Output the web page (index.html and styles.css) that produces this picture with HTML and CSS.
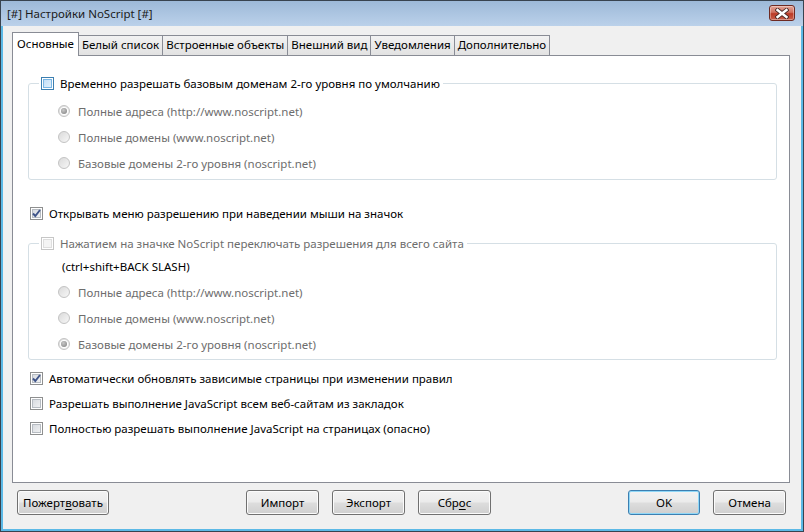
FILE: index.html
```html
<!DOCTYPE html>
<html lang="ru">

<head>
    <meta charset="UTF-8">
    <title>[#] Настройки NoScript [#]</title>
    <link rel="stylesheet" href="styles.css">
</head>

<body>
    <div class="window">
        <div class="titlebar">
            <span class="title">[#] Настройки NoScript [#]</span>
            <div class="close-btn">
                <svg width="14" height="11" viewBox="0 0 14 11">
                    <path d="M2.5 2 L11.5 9 M11.5 2 L2.5 9" stroke="#4a2a26" stroke-width="4.2" stroke-linecap="square" fill="none"/>
                    <path d="M2.5 2 L11.5 9 M11.5 2 L2.5 9" stroke="#ffffff" stroke-width="2.4" stroke-linecap="square" fill="none"/>
                </svg>
            </div>
        </div>

        <div class="client">
            <div class="tabs">
                <div class="tab active">Основные</div>
                <div class="tab">Белый список</div>
                <div class="tab">Встроенные объекты</div>
                <div class="tab">Внешний вид</div>
                <div class="tab">Уведомления</div>
                <div class="tab">Дополнительно</div>
            </div>

            <div class="panel">
                <fieldset class="group group-first">
                    <legend><span class="legend-inner"><span class="check hover"></span>Временно разрешать базовым доменам 2-го уровня по умолчанию</span></legend>
                    <div class="radio-row disabled"><span class="radio checked"></span>Полные адреса (http://www.noscript.net)</div>
                    <div class="radio-row disabled"><span class="radio"></span>Полные домены (www.noscript.net)</div>
                    <div class="radio-row disabled"><span class="radio"></span>Базовые домены 2-го уровня (noscript.net)</div>
                </fieldset>

                <div class="check-row first-check">
                    <span class="check"><svg width="11" height="11" viewBox="0 0 11 11"><path d="M2 5.5 L4.3 8 L9 2" stroke="#3f5489" stroke-width="1.9" fill="none"/></svg></span>Открывать меню разрешению при наведении мыши на значок
                </div>

                <fieldset class="group group-second">
                    <legend><span class="legend-inner disabled"><span class="check off"></span>Нажатием на значке NoScript переключать разрешения для всего сайта</span></legend>
                    <div class="hint">(ctrl+shift+BACK SLASH)</div>
                    <div class="radio-row disabled"><span class="radio"></span>Полные адреса (http://www.noscript.net)</div>
                    <div class="radio-row disabled"><span class="radio"></span>Полные домены (www.noscript.net)</div>
                    <div class="radio-row disabled"><span class="radio checked"></span>Базовые домены 2-го уровня (noscript.net)</div>
                </fieldset>

                <div class="check-row after-group">
                    <span class="check"><svg width="11" height="11" viewBox="0 0 11 11"><path d="M2 5.5 L4.3 8 L9 2" stroke="#3f5489" stroke-width="1.9" fill="none"/></svg></span>Автоматически обновлять зависимые страницы при изменении правил
                </div>
                <div class="check-row"><span class="check"></span>Разрешать выполнение JavaScript всем веб-сайтам из закладок</div>
                <div class="check-row"><span class="check"></span>Полностью разрешать выполнение JavaScript на страницах (опасно)</div>
            </div>

            <div class="buttons">
                <button class="btn wide">Пожерт<u>в</u>овать</button>
                <div class="btn-group">
                    <button class="btn">Импорт</button>
                    <button class="btn">Экспорт</button>
                    <button class="btn">Сбр<u>о</u>с</button>
                </div>
                <div class="btn-group">
                    <button class="btn default">OK</button>
                    <button class="btn">Отмена</button>
                </div>
            </div>
        </div>
    </div>
</body>

</html>
```

FILE: styles.css
```css
body {
    margin: 0;
    font-family: "Segoe UI", "Noto Sans", "Open Sans", sans-serif;
    font-size: 11.5px;
    color: #000;
    background: #f0f0f0;
}

.window {
    width: 804px;
    height: 532px;
    box-sizing: border-box;
    border: 1px solid #38434f;
    display: flex;
    flex-direction: column;
    background: #a9c4e2;
}

/* Заголовок окна */
.titlebar {
    height: 25px;
    flex: none;
    display: flex;
    align-items: center;
    justify-content: space-between;
    padding: 0 6px 0 6px;
    background: linear-gradient(#9db9d8, #bbd1ea);
}

.title {
    color: #1b1b1b;
    font-size: 11.5px;
}

.close-btn {
    width: 26px;
    height: 16px;
    box-sizing: border-box;
    margin-top: -1px;
    margin-right: 2px;
    border: 1px solid #6e2a22;
    border-radius: 3px;
    background: linear-gradient(#e3a597 0%, #d0705f 45%, #bb3a26 55%, #c9604c 100%);
    box-shadow: inset 0 0 0 1px rgba(255, 255, 255, 0.35);
    display: flex;
    align-items: center;
    justify-content: center;
}

.client {
    flex: 1;
    background: #f0f0f0;
    border: 2px solid #5cb9e6;
    border-top: none;
    display: flex;
    flex-direction: column;
}

/* Вкладки */
.tabs {
    display: flex;
    align-items: flex-end;
    height: 22px;
    margin: 7px 0 0 9px;
}

.tab {
    height: 19px;
    line-height: 18px;
    padding: 0 3px;
    border: 1px solid #898c95;
    border-bottom: none;
    margin-left: -1px;
    background: linear-gradient(#f2f2f2, #e2e2e2);
    white-space: nowrap;
}

.tab.active {
    height: 23px;
    line-height: 21px;
    padding: 0 4px;
    margin-left: 0;
    margin-bottom: -1px;
    background: #fff;
    position: relative;
    z-index: 1;
}

.panel {
    height: 428px;
    box-sizing: border-box;
    margin: 0 11px 0 9px;
    border: 1px solid #898c95;
    background: #fff;
}

/* Группы */
.group {
    margin: 0 12px 0 15px;
    padding: 7px 0 3px 0;
    border: 1px solid #d5dfe5;
    border-radius: 3px;
    min-width: 0;
}

.group legend {
    margin-left: 10px;
    padding: 0 3px 0 2px;
}

.group-first {
    margin-top: 19px;
}

.group-second {
    margin-top: 9px;
    padding: 3px 0 2px 0;
}

.legend-inner {
    display: flex;
    align-items: center;
    height: 16px;
}

.radio-row {
    height: 26px;
    display: flex;
    align-items: center;
    padding-left: 29px;
}

.hint {
    height: 25px;
    display: flex;
    align-items: center;
    padding-left: 33px;
}

.check-row {
    height: 25px;
    display: flex;
    align-items: center;
    padding-left: 17px;
}

.first-check {
    margin-top: 21px;
}

.after-group {
    margin-top: 6px;
}

.disabled {
    color: #6d6d6d;
}

/* Чекбоксы */
.check {
    width: 13px;
    height: 13px;
    box-sizing: border-box;
    flex: none;
    margin-right: 6px;
    border: 1px solid #8e8f8f;
    background: #f4f4f4;
    box-shadow: inset 0 0 0 1px #fff, inset 0 0 0 2px #b7bcc2;
    background-image: linear-gradient(135deg, #d2d6dc, #f6f6f6);
    display: flex;
    align-items: center;
    justify-content: center;
}

.check svg {
    display: block;
}

.check.hover {
    border-color: #3c7fb1;
    background-image: linear-gradient(135deg, #b9daf6, #e9f4fd);
    box-shadow: inset 0 0 0 1px #fff, inset 0 0 0 2px #79b6e4;
}

.check.off {
    border-color: #c6c6c6;
    background-image: none;
    background: #f4f4f4;
    box-shadow: inset 0 0 0 1px #fff, inset 0 0 0 2px #dedede;
}

/* Радиокнопки */
.radio {
    width: 12px;
    height: 12px;
    box-sizing: border-box;
    flex: none;
    margin-right: 8px;
    border: 1px solid #c3c3c3;
    border-radius: 50%;
    background: linear-gradient(135deg, #dadada, #f7f7f7);
    display: flex;
    align-items: center;
    justify-content: center;
}

.radio.checked::after {
    content: "";
    width: 6px;
    height: 6px;
    border-radius: 50%;
    background: radial-gradient(circle at 40% 35%, #c8c8c8, #7f7f7f);
    box-shadow: 0 0 0 1px #fff;
}

/* Кнопки внизу */
.buttons {
    display: flex;
    justify-content: space-between;
    padding: 0 15px 0 14px;
    margin-top: 7px;
}

.btn-group {
    display: flex;
    gap: 13px;
}

.btn {
    height: 25px;
    min-width: 73px;
    box-sizing: border-box;
    font-family: inherit;
    font-size: 11.5px;
    color: #000;
    border: 1px solid #707070;
    border-radius: 3px;
    background: linear-gradient(#f2f2f2 0%, #ebebeb 48%, #dddddd 52%, #cfcfcf 100%);
    box-shadow: inset 0 0 0 1px #fbfbfb;
    padding: 0 8px;
}

.btn.wide {
    width: 92px;
    padding: 0 4px;
}

.btn.default {
    min-width: 72px;
    border-color: #3c7fb1;
    box-shadow: inset 0 0 0 1px #8fd7f7;
}

.btn u {
    text-underline-offset: 2px;
}
```
